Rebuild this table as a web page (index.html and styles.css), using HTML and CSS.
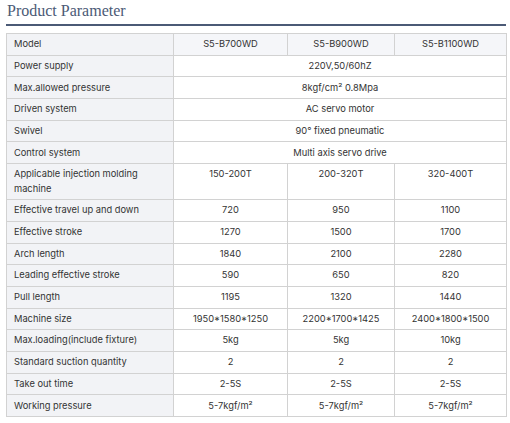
FILE: index.html
```html
<!DOCTYPE html>
<html>
<head>
<meta charset="utf-8">
<link rel="stylesheet" href="styles.css">
</head>
<body>
<div class="wrap">
  <h2 class="title">Product Parameter</h2>
  <table class="params">
    <colgroup>
      <col class="c1"><col class="c2"><col class="c3"><col class="c4">
    </colgroup>
    <tr class="head"><td class="lbl">Model</td><td>S5-B700WD</td><td>S5-B900WD</td><td>S5-B1100WD</td></tr>
    <tr><td class="lbl">Power supply</td><td colspan="3">220V,50/60hZ</td></tr>
    <tr><td class="lbl">Max.allowed pressure</td><td colspan="3">8kgf/cm² 0.8Mpa</td></tr>
    <tr><td class="lbl">Driven system</td><td colspan="3">AC servo motor</td></tr>
    <tr><td class="lbl">Swivel</td><td colspan="3">90° fixed pneumatic</td></tr>
    <tr><td class="lbl">Control system</td><td colspan="3">Multi axis servo drive</td></tr>
    <tr class="top"><td class="lbl">Applicable injection molding machine</td><td>150-200T</td><td>200-320T</td><td>320-400T</td></tr>
    <tr><td class="lbl">Effective travel up and down</td><td>720</td><td>950</td><td>1100</td></tr>
    <tr><td class="lbl">Effective stroke</td><td>1270</td><td>1500</td><td>1700</td></tr>
    <tr><td class="lbl">Arch length</td><td>1840</td><td>2100</td><td>2280</td></tr>
    <tr><td class="lbl">Leading effective stroke</td><td>590</td><td>650</td><td>820</td></tr>
    <tr><td class="lbl">Pull length</td><td>1195</td><td>1320</td><td>1440</td></tr>
    <tr><td class="lbl">Machine size</td><td>1950*1580*1250</td><td>2200*1700*1425</td><td>2400*1800*1500</td></tr>
    <tr><td class="lbl">Max.loading(include fixture)</td><td>5kg</td><td>5kg</td><td>10kg</td></tr>
    <tr><td class="lbl">Standard suction quantity</td><td>2</td><td>2</td><td>2</td></tr>
    <tr><td class="lbl">Take out time</td><td>2-5S</td><td>2-5S</td><td>2-5S</td></tr>
    <tr><td class="lbl">Working pressure</td><td>5-7kgf/m²</td><td>5-7kgf/m²</td><td>5-7kgf/m²</td></tr>
  </table>
</div>
</body>
</html>
```

FILE: styles.css
```css
html, body {
  margin: 0;
  padding: 0;
  background: #ffffff;
}
.wrap {
  width: 500px;
  margin-left: 6px;
}
.title {
  margin: 0;
  padding: 2px 0 4px 1px;
  font-family: "Liberation Serif", "Times New Roman", serif;
  font-weight: normal;
  font-size: 16px;
  line-height: 18px;
  color: #4b5a76;
  border-bottom: 2px solid #4b5a76;
}
.params {
  margin-top: 7px;
  width: 500px;
  table-layout: fixed;
  border-collapse: collapse;
  font-family: Inter, "Noto Sans", sans-serif;
  font-size: 9.3px;
  color: #333333;
}
.c1 { width: 167px; }
.c2 { width: 114px; }
.c3 { width: 107px; }
.c4 { width: 112px; }
.params td {
  border: 1px solid #d2d2d2;
  padding: 3.15px 6px;
  line-height: 14.4px;
  text-align: center;
  vertical-align: middle;
}
.params td.lbl {
  text-align: left;
  padding-left: 7px;
  background: #f2f3f6;
}
.params tr.head td {
  background: #f5f6f9;
}
.params tr.head td.lbl {
  background: #f2f3f6;
}
.params tr.top td {
  vertical-align: top;
}
```
